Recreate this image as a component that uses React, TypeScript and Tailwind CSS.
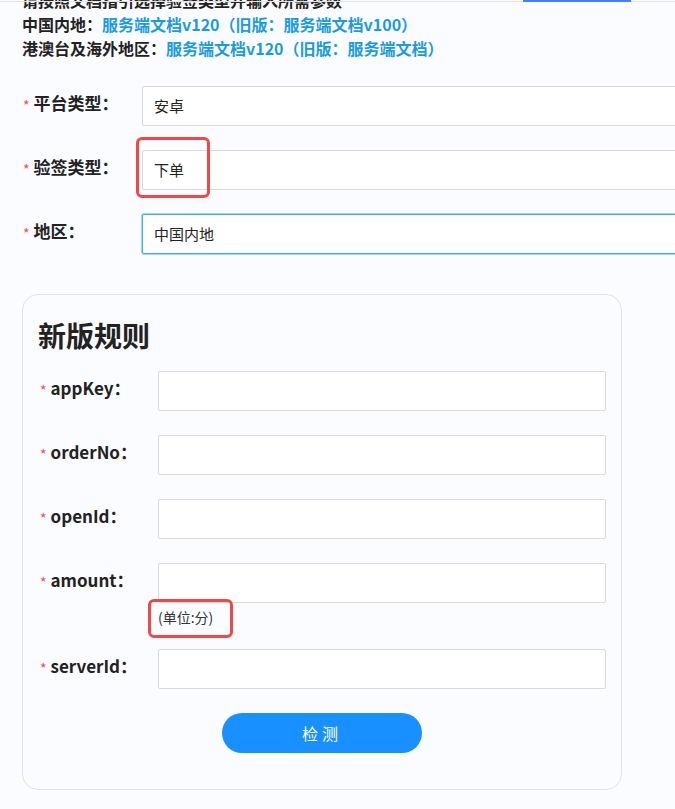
const font = { fontFamily: '"Noto Sans CJK SC", "Noto Sans", sans-serif' };

function Star() {
  return <span className="mr-[4px] mt-[4px] text-[14px] leading-[14px] font-normal text-[#f5475f]">*</span>;
}

function Field({ label, value, focused }: { label: string; value?: string; focused?: boolean }) {
  return (
    <div className="flex items-start">
      <div className="w-[120px] shrink-0 pl-[1px] pt-[5px] flex items-center text-[17px] leading-[24px] font-bold text-[#222]">
        <Star />
        {label}
      </div>
      <div
        className={
          'h-[40px] flex-1 rounded-[2px] border bg-white px-[11px] flex items-center text-[15px] text-[#222] ' +
          (focused ? 'border-[#40a9ff] shadow-[0_0_0_1px_#a6d4ff]' : 'border-[#d9d9d9]')
        }
      >
        {value}
      </div>
    </div>
  );
}

function CardField({ label, note }: { label: string; note?: string }) {
  return (
    <div className="flex items-start">
      <div className="w-[120px] shrink-0 pl-[2px] pt-[5px] flex items-center text-[17px] leading-[24px] font-bold text-[#222]">
        <Star />
        {label}
      </div>
      <div className="flex-1">
        <div className="h-[40px] rounded-[2px] border border-[#d9d9d9] bg-white" />
        {note && <div className="mt-[4px] text-[14px] leading-[20px] text-[#333]">{note}</div>}
      </div>
    </div>
  );
}

export default function App() {
  return (
    <div className="relative min-h-[809px] w-[675px] overflow-hidden bg-[#fbfcff]" style={font}>
      {/* tab strip at top */}
      <div className="absolute left-0 top-[1px] h-[1px] w-full bg-[#e3e3e6]" />
      <div className="absolute left-[523px] top-0 h-[2px] w-[108px] bg-[#4a7ef6]" />

      <div className="pl-[22px] pt-0">
        <div className="-mt-[12px] text-[16px] leading-[24px] font-bold text-[#222]">
          <div>请按照文档指引选择验签类型并输入所需参数</div>
          <div>
            中国内地：<span className="text-[#1a9bdd]">服务端文档v120（旧版：服务端文档v100）</span>
          </div>
          <div>
            港澳台及海外地区：<span className="text-[#1a9bdd]">服务端文档v120（旧版：服务端文档）</span>
          </div>
        </div>

        <div className="mt-[26px] flex flex-col gap-[24px] mr-[-10px]">
          <Field label="平台类型：" value="安卓" />
          <Field label="验签类型：" value="下单" />
          <Field label="地区：" value="中国内地" focused />
        </div>

        <div className="mt-[40px] w-[600px] h-[496px] rounded-[16px] border border-[#e2e2e6] pl-[15px] pr-[15px] pt-[22px]">
          <h2 className="text-[28px] leading-[36px] font-bold text-[#222]">新版规则</h2>
          <div className="mt-[18px] flex flex-col gap-[24px]">
            <CardField label="appKey：" />
            <CardField label="orderNo：" />
            <CardField label="openId：" />
            <CardField label="amount：" note="(单位:分)" />
            <div className="-mt-[2px]">
              <CardField label="serverId：" />
            </div>
          </div>
          <div className="mt-[24px] flex justify-center">
            <button className="h-[40px] w-[200px] rounded-full bg-[#1890ff] text-[16px] tracking-[4px] text-white">
              检测
            </button>
          </div>
        </div>
      </div>

      {/* annotation boxes */}
      <div className="absolute left-[136px] top-[137px] h-[61px] w-[74px] rounded-[6px] border-[3px] border-[#f04848]" />
      <div className="absolute left-[148px] top-[599px] h-[39px] w-[85px] rounded-[6px] border-[3px] border-[#f04848]" />
    </div>
  );
}
